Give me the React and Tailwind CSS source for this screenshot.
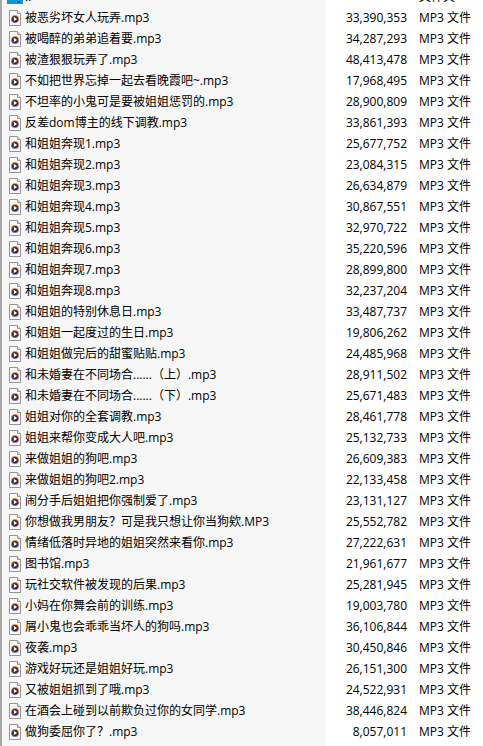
import React from "react";

const files = [
  ["被恶劣坏女人玩弄.mp3", "33,390,353"],
  ["被喝醉的弟弟追着要.mp3", "34,287,293"],
  ["被渣狠狠玩弄了.mp3", "48,413,478"],
  ["不如把世界忘掉一起去看晚霞吧~.mp3", "17,968,495"],
  ["不坦率的小鬼可是要被姐姐惩罚的.mp3", "28,900,809"],
  ["反差dom博主的线下调教.mp3", "33,861,393"],
  ["和姐姐奔现1.mp3", "25,677,752"],
  ["和姐姐奔现2.mp3", "23,084,315"],
  ["和姐姐奔现3.mp3", "26,634,879"],
  ["和姐姐奔现4.mp3", "30,867,551"],
  ["和姐姐奔现5.mp3", "32,970,722"],
  ["和姐姐奔现6.mp3", "35,220,596"],
  ["和姐姐奔现7.mp3", "28,899,800"],
  ["和姐姐奔现8.mp3", "32,237,204"],
  ["和姐姐的特别休息日.mp3", "33,487,737"],
  ["和姐姐一起度过的生日.mp3", "19,806,262"],
  ["和姐姐做完后的甜蜜贴贴.mp3", "24,485,968"],
  ["和未婚妻在不同场合......（上）.mp3", "28,911,502"],
  ["和未婚妻在不同场合......（下）.mp3", "25,671,483"],
  ["姐姐对你的全套调教.mp3", "28,461,778"],
  ["姐姐来帮你变成大人吧.mp3", "25,132,733"],
  ["来做姐姐的狗吧.mp3", "26,609,383"],
  ["来做姐姐的狗吧2.mp3", "22,133,458"],
  ["闹分手后姐姐把你强制爱了.mp3", "23,131,127"],
  ["你想做我男朋友？可是我只想让你当狗欸.MP3", "25,552,782"],
  ["情绪低落时异地的姐姐突然来看你.mp3", "27,222,631"],
  ["图书馆.mp3", "21,961,677"],
  ["玩社交软件被发现的后果.mp3", "25,281,945"],
  ["小妈在你舞会前的训练.mp3", "19,003,780"],
  ["屑小鬼也会乖乖当坏人的狗吗.mp3", "36,106,844"],
  ["夜袭.mp3", "30,450,846"],
  ["游戏好玩还是姐姐好玩.mp3", "26,151,300"],
  ["又被姐姐抓到了哦.mp3", "24,522,931"],
  ["在酒会上碰到以前欺负过你的女同学.mp3", "38,446,824"],
  ["做狗委屈你了？.mp3", "8,057,011"],
];

const AudioIcon = () => (
  <svg viewBox="0 0 12 16" className="w-3 h-4 shrink-0" aria-hidden="true">
    <path d="M.5.5h8l3 3v12H.5z" fill="#fcfcfc" stroke="#949494" />
    <path d="M8.5.5v3h3" fill="#eee" stroke="#949494" />
    <path d="M2 9a4 4 0 0 1 8 0z" fill="#f08a4a" />
    <path d="M2 9a4 4 0 0 0 8 0z" fill="#8a62ab" />
    <circle cx="6" cy="9" r="3" fill="#26262e" />
    <path d="M4.8 6.8L8.2 9l-3.4 2.2z" fill="#fff" />
  </svg>
);

// Parent folder entry, scrolled almost out of view
const ParentIcon = () => (
  <svg viewBox="0 0 16 16" className="w-4 h-4 shrink-0" aria-hidden="true">
    <path d="M0 2h16v13H0z" fill="#1495d4" />
    <path d="M11 12h2v2h-2z" fill="#0b5f94" />
  </svg>
);

const App = () => {
  return (
    <div className="min-h-screen border-l-2 border-[#a8a8a8] bg-[linear-gradient(to_left,#fff_158px,#f7f7f7_158px)] text-black text-[12px] leading-[21px] font-['Open_Sans','Noto_Sans_CJK_SC',sans-serif]">
      <table className="w-full table-fixed border-collapse">
        <colgroup>
          <col />
          <col className="w-[82px]" />
          <col className="w-[76px]" />
        </colgroup>
        <tbody>
          <tr>
            <td className="p-0 pl-[5px]">
              <div className="h-[7px] overflow-hidden flex items-end">
                <div className="flex items-center gap-0.5">
                  <ParentIcon />
                  <span>..</span>
                </div>
              </div>
            </td>
            <td className="p-0" />
            <td className="p-0 pl-3">
              <div className="h-[7px] overflow-hidden flex items-end">
                <span>文件夹</span>
              </div>
            </td>
          </tr>
          {files.map(([name, size]) => (
            <tr key={name}>
              <td className="p-0 pl-[7px]">
                <div className="h-[21px] flex items-center gap-1 whitespace-nowrap">
                  <AudioIcon />
                  <span>{name}</span>
                </div>
              </td>
              <td className="p-0 text-right">{size}</td>
              <td className="p-0 pl-3 whitespace-nowrap">MP3 文件</td>
            </tr>
          ))}
        </tbody>
      </table>
    </div>
  );
};

export default App;
